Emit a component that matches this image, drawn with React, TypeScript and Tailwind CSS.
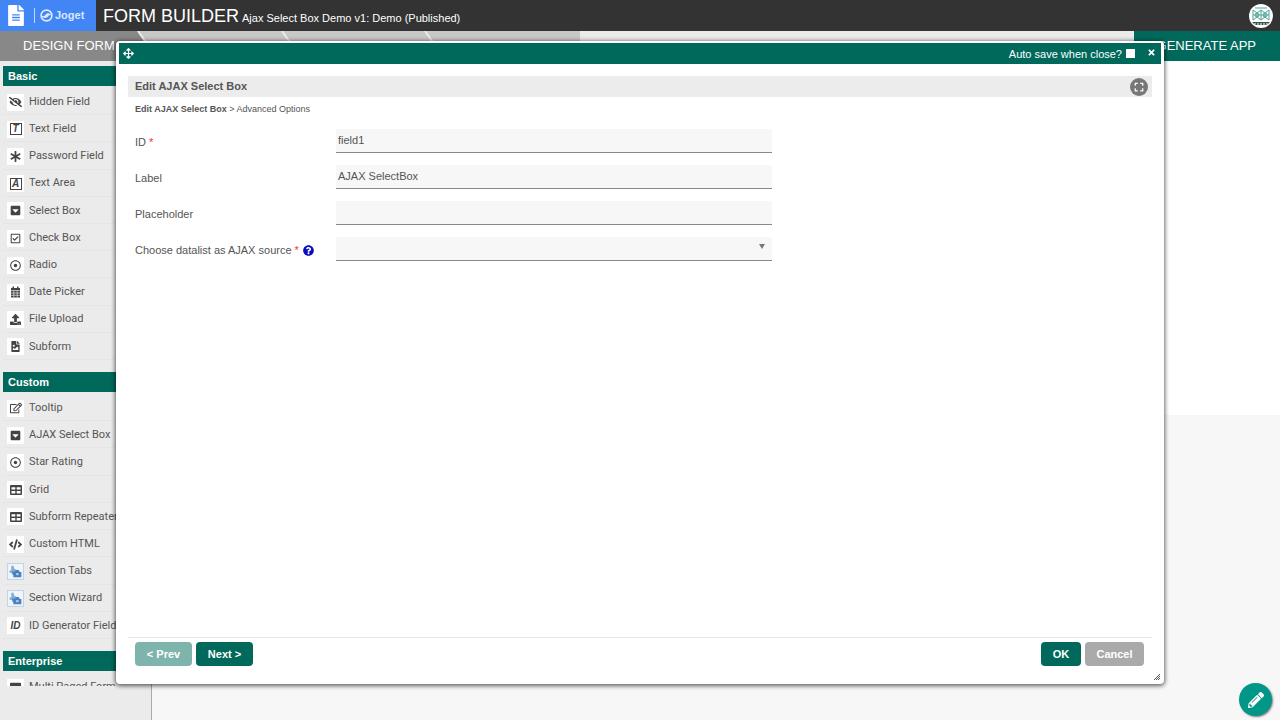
import type { ReactNode } from 'react';
import {
  FaArrowsAlt,
  FaAsterisk,
  FaCaretSquareDown,
  FaCode,
  FaExpand,
  FaEyeSlash,
  FaFileAlt,
  FaFileImage,
  FaPencilAlt,
  FaQuestionCircle,
  FaRegCheckSquare,
  FaRegDotCircle,
  FaRegEdit,
  FaTimes,
  FaUpload,
  FaRegWindowMaximize,
} from 'react-icons/fa';

type PaletteItem = { label: string; icon: ReactNode };

// Boxed italic letter used by the text elements
const LetterBox = ({ letter }: { letter: string }) => (
  <span className="flex h-3 w-3 items-center justify-center border border-[#444] font-['Liberation_Sans',Arial,sans-serif] text-[10px] leading-none font-bold italic">
    {letter}
  </span>
);

const GridIcon = () => (
  <svg viewBox="0 0 12 10" className="h-[10px] w-3">
    <rect width="12" height="10" rx="1" fill="#444" />
    <path d="M1.5 2.2h3.8v2.4H1.5zM6.7 2.2h3.8v2.4H6.7zM1.5 6h3.8v2.4H1.5zM6.7 6h3.8v2.4H6.7z" fill="#fff" />
  </svg>
);

const CalendarIcon = () => (
  <svg viewBox="0 0 11 12" className="h-3 w-[11px]">
    <path d="M1 2h1.5V0.5h1.5V2h3V0.5h1.5V2H10v9.5H1z" fill="#444" />
    <path d="M1 4.5h9M1 7h9M1 9.3h9M3.8 4.5v7M7.2 4.5v7" stroke="#fff" strokeWidth="0.6" />
  </svg>
);

const PluginIcon = () => (
  <svg viewBox="0 0 16 16" className="h-[17px] w-[17px]">
    <rect x="0.5" y="0.5" width="15" height="15" fill="#f0f5fa" stroke="#c4d3e2" />
    <path d="M4 2.5h2l1 3 2 1-1 3H3l-1-2 2-1z" fill="#86aed4" />
    <path d="M5 8h3V6.5h3l1 2h1.5v5H6V11H5z" fill="#4a80bd" />
    <path d="M8.5 9.5h2.5v2H8.5z" fill="#a9c8e8" />
  </svg>
);

const basicItems: PaletteItem[] = [
  { label: 'Hidden Field', icon: <FaEyeSlash className="h-3 w-[13px]" /> },
  { label: 'Text Field', icon: <LetterBox letter="T" /> },
  { label: 'Password Field', icon: <FaAsterisk /> },
  { label: 'Text Area', icon: <LetterBox letter="A" /> },
  { label: 'Select Box', icon: <FaCaretSquareDown /> },
  { label: 'Check Box', icon: <FaRegCheckSquare /> },
  { label: 'Radio', icon: <FaRegDotCircle /> },
  { label: 'Date Picker', icon: <CalendarIcon /> },
  { label: 'File Upload', icon: <FaUpload /> },
  { label: 'Subform', icon: <FaFileImage /> },
];

const customItems: PaletteItem[] = [
  { label: 'Tooltip', icon: <FaRegEdit className="h-3 w-3" /> },
  { label: 'AJAX Select Box', icon: <FaCaretSquareDown /> },
  { label: 'Star Rating', icon: <FaRegDotCircle /> },
  { label: 'Grid', icon: <GridIcon /> },
  { label: 'Subform Repeater', icon: <GridIcon /> },
  { label: 'Custom HTML', icon: <FaCode className="h-[13px] w-[13px]" /> },
  { label: 'Section Tabs', icon: <PluginIcon /> },
  { label: 'Section Wizard', icon: <PluginIcon /> },
  { label: 'ID Generator Field', icon: <span className="text-[10px] font-bold italic">ID</span> },
];

const enterpriseItems: PaletteItem[] = [
  { label: 'Multi Paged Form', icon: <FaRegWindowMaximize /> },
];

const PaletteGroup = ({ title, items, listClass }: { title: string; items: PaletteItem[]; listClass: string }) => (
  <section className="mb-3 pl-[3px]">
    <h2 className="h-5 bg-[#00695c] pl-[5px] text-[11px] leading-5 font-bold text-white">{title}</h2>
    <ul className={`mt-0.5 grid auto-rows-fr ${listClass}`}>
      {items.map((item) => (
        <li key={item.label} className="flex items-center gap-[5px] border-b border-[#e5e5e5] pt-0.5 pl-1 whitespace-nowrap">
          <span className="flex h-[17px] w-[17px] shrink-0 items-center justify-center bg-white text-[11px] text-[#444]">
            {item.icon}
          </span>
          <span className="font-[Roboto,sans-serif] text-[11px] text-[#555]">{item.label}</span>
        </li>
      ))}
    </ul>
  </section>
);

const JogetMark = () => (
  <svg viewBox="0 0 24 24" className="h-[13px] w-[13px]" fill="#dbe8ff">
    <circle cx="12" cy="12" r="10" fill="none" stroke="#dbe8ff" strokeWidth="3" />
    <path d="M2 12c4 2 8 0 9-3 3-2 7-1 10 2l-5 1c-2 5-8 6-14 2z" />
  </svg>
);

const Header = () => (
  <header className="flex h-[31px] items-center bg-[#333] text-white">
    <a href="#home" className="flex h-full w-24 shrink-0 items-center bg-[#4285f4] pl-2">
      <FaFileAlt className="h-[21px] w-4" />
      <span className="ml-2.5 h-[15px] w-px bg-[#c5d9fc]" />
      <span className="ml-[5px] flex items-center gap-0.5 text-[11px] font-bold text-[#dbe8ff]">
        <JogetMark />
        Joget
      </span>
    </a>
    <h1 className="ml-[7px] flex items-baseline gap-[3px] pt-[3px] text-lg leading-7">
      FORM BUILDER
      <small className="text-[11px]">Ajax Select Box Demo v1: Demo (Published)</small>
    </h1>
    <span className="mr-[7px] ml-auto">
      <svg viewBox="0 0 24 24" className="h-6 w-6">
        <circle cx="12" cy="12" r="12" fill="#fff" />
        <g fill="none" stroke="#4ba596" strokeWidth="1">
          <path d="M4 6l4 3 4-3 4 3 4-3v10l-4-3-4 3-4-3-4 3zM6 4h12M8 9v5M12 6v10M16 9v5M4 11h16" />
          <circle cx="8" cy="11" r="2" />
          <circle cx="16" cy="11" r="2" />
        </g>
        <path d="M3 18h18l-3 3H6z" fill="#38544f" />
        <path d="M5 20h14" stroke="#fff" strokeDasharray="2 1" />
      </svg>
    </span>
  </header>
);

const StepBar = () => (
  <nav className="flex h-[30px] bg-[#ebebeb] text-[13px] leading-[30px]">
    <div className="flex w-[580px] bg-[#c8c8c8]">
      <a href="#design" className="w-[114px] bg-[#888] pl-[23px] whitespace-nowrap text-white">
        DESIGN FORM
      </a>
      <svg viewBox="0 0 466 30" className="h-[30px] w-[466px]" stroke="#ebebeb" strokeWidth="2">
        <path d="M0 0h23l21 30H0z" fill="#888" stroke="none" />
        <path d="M24 0l21 30M168 0l21 30M311 0l21 30" />
      </svg>
    </div>
    <a href="#generate" className="ml-auto w-[146px] bg-[#00695c] pr-6 text-right text-white">
      GENERATE APP
    </a>
  </nav>
);

const FieldRow = ({ id, label, required, children }: { id: string; label: string; required?: boolean; children: ReactNode }) => (
  <div className="flex h-9 items-start">
    <div className="flex w-[201px] shrink-0 items-center pt-1 text-[11px] leading-[18px] text-[#555]">
      <label htmlFor={id}>
        {label} {required && <span className="text-red-500">*</span>}
      </label>
      {id === 'datalist' && (
        <button type="button" aria-label="Help" className="ml-1 text-[#0a0ac0]">
          <FaQuestionCircle />
        </button>
      )}
    </div>
    {children}
  </div>
);

const fieldClass = 'block h-6 w-[436px] border-b border-[#888] bg-[#f7f7f7] px-0.5 pb-0.5 text-[11px] text-[#555] outline-none';
const buttonClass = 'h-6 rounded text-[11px] font-bold text-white';

const EditDialog = () => (
  <div
    role="dialog"
    aria-labelledby="dialog-title"
    className="absolute inset-x-[116px] top-[41px] bottom-9 flex flex-col rounded-sm border-2 border-white bg-white shadow-[0_1px_4px_1px_rgba(0,0,0,0.6)]"
  >
    <div className="mr-px ml-px flex h-[21px] items-center bg-[#00695c] px-1 text-white">
      <FaArrowsAlt className="h-[11px] w-[11px]" />
      <label htmlFor="autosave" className="ml-auto pt-0.5 text-[11px]">
        Auto save when close?
      </label>
      <input id="autosave" type="checkbox" className="ml-1 h-[9px] w-[9px] appearance-none bg-white" />
      <button type="button" aria-label="Close" className="mr-px ml-3 pb-0.5 text-[9px]">
        <FaTimes />
      </button>
    </div>

    <div className="flex grow flex-col px-2.5 pt-3">
      <div className="flex h-[21px] items-center justify-between bg-[#ececec] pr-1 pl-[7px]">
        <h2 id="dialog-title" className="text-[11px] font-bold text-[#555]">
          Edit AJAX Select Box
        </h2>
        <button
          type="button"
          aria-label="Expand"
          className="flex h-[18px] w-[18px] items-center justify-center rounded-full bg-[#777] text-[10px] text-white"
        >
          <FaExpand />
        </button>
      </div>
      <div className="mt-1.5 pl-[7px] text-[9px] leading-3 text-[#555]">
        <b>Edit AJAX Select Box</b> &gt; <a href="#advanced">Advanced Options</a>
      </div>

      <form className="mt-[14px] pl-[7px]">
        <FieldRow id="field-id" label="ID" required>
          <input id="field-id" defaultValue="field1" className={fieldClass} />
        </FieldRow>
        <FieldRow id="field-label" label="Label">
          <input id="field-label" defaultValue="AJAX SelectBox" className={fieldClass} />
        </FieldRow>
        <FieldRow id="placeholder" label="Placeholder">
          <input id="placeholder" className={fieldClass} />
        </FieldRow>
        <FieldRow id="datalist" label="Choose datalist as AJAX source" required>
          <div className="relative">
            <select id="datalist" className={`appearance-none ${fieldClass}`} defaultValue="">
              <option value="" />
            </select>
            <svg viewBox="0 0 6 5" className="pointer-events-none absolute top-[7px] right-[7px] h-[5px] w-1.5">
              <path d="M0 0h6L3 5z" fill="#777" />
            </svg>
          </div>
        </FieldRow>
      </form>

      <footer className="mt-auto mb-4 flex border-t border-[#e8e8e8] pt-1 pr-2 pl-[7px]">
        <button type="button" className={`w-[57px] bg-[#7fb4ac] ${buttonClass}`}>
          &lt; Prev
        </button>
        <button type="button" className={`ml-1 w-[57px] bg-[#00695c] ${buttonClass}`}>
          Next &gt;
        </button>
        <button type="button" className={`ml-auto w-10 bg-[#00695c] ${buttonClass}`}>
          OK
        </button>
        <button type="button" className={`ml-1 w-[59px] bg-[#aaa] ${buttonClass}`}>
          Cancel
        </button>
      </footer>
    </div>
    <svg viewBox="0 0 6 6" className="absolute right-0.5 bottom-0.5 h-1.5 w-1.5" stroke="#555">
      <path d="M0 6L6 0M2 6l4-4M4 6l2-2" />
    </svg>
  </div>
);

export default function App() {
  return (
    <div className="relative flex h-screen flex-col overflow-hidden bg-[#f7f7f7] font-['Liberation_Sans',Arial,sans-serif]">
      <Header />
      <StepBar />
      <div className="flex min-h-0 grow">
        <aside className="w-[152px] shrink-0 border-r border-[#aaa] bg-[#ebebeb] pt-[5px] pb-[34px]">
          <div className="h-full overflow-hidden">
            <PaletteGroup title="Basic" items={basicItems} listClass="h-[272px]" />
            <PaletteGroup title="Custom" items={customItems} listClass="h-[245px]" />
            <PaletteGroup title="Enterprise" items={enterpriseItems} listClass="h-[27px]" />
          </div>
        </aside>
        <main className="h-[354px] grow bg-white" />
      </div>
      <EditDialog />
      <button
        type="button"
        aria-label="Quick edit"
        className="absolute right-2 bottom-1 flex h-[33px] w-[33px] items-center justify-center rounded-full bg-[#009688] text-base text-white shadow-[1px_1px_2px_rgba(0,0,0,0.5)]"
      >
        <FaPencilAlt />
      </button>
    </div>
  );
}
